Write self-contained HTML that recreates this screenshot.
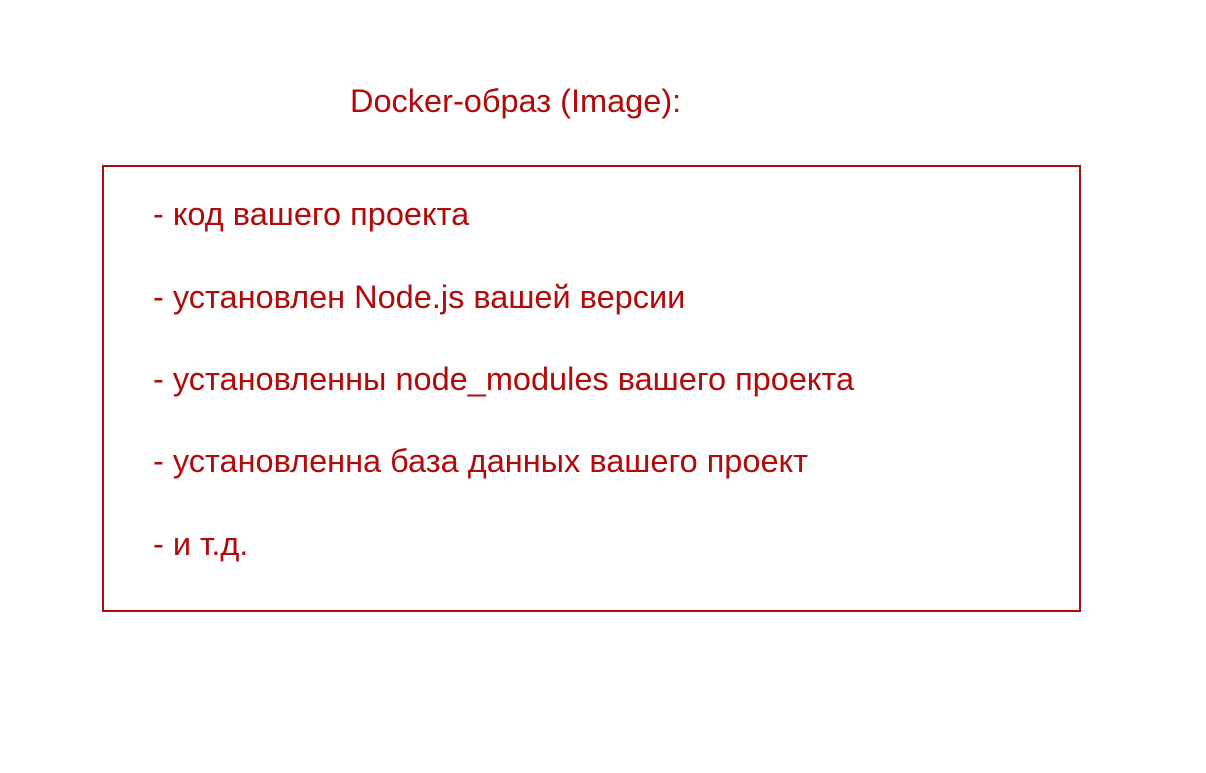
<!DOCTYPE html>
<html><head><meta charset="utf-8"><style>
body{margin:0;width:1206px;height:773px;background:#fff;position:relative;overflow:hidden;font-family:"Liberation Sans",Arial,sans-serif;color:#b00a0a;}
.t{position:absolute;font-size:32.5px;line-height:32.5px;white-space:nowrap;}
.box{position:absolute;left:102px;top:165px;width:975px;height:443px;border:2px solid #b00a0a;}
</style></head><body>
<div class="t" style="left:350px;top:85px">Docker-образ (Image):</div>
<div class="box"></div>
<div class="t" style="left:153px;top:198px">- код вашего проекта</div>
<div class="t" style="left:153px;top:281px">- установлен Node.js вашей версии</div>
<div class="t" style="left:153px;top:363px">- установленны node_modules вашего проекта</div>
<div class="t" style="left:153px;top:445px">- установленна база данных вашего проект</div>
<div class="t" style="left:153px;top:528px">- и т.д.</div>
</body></html>
